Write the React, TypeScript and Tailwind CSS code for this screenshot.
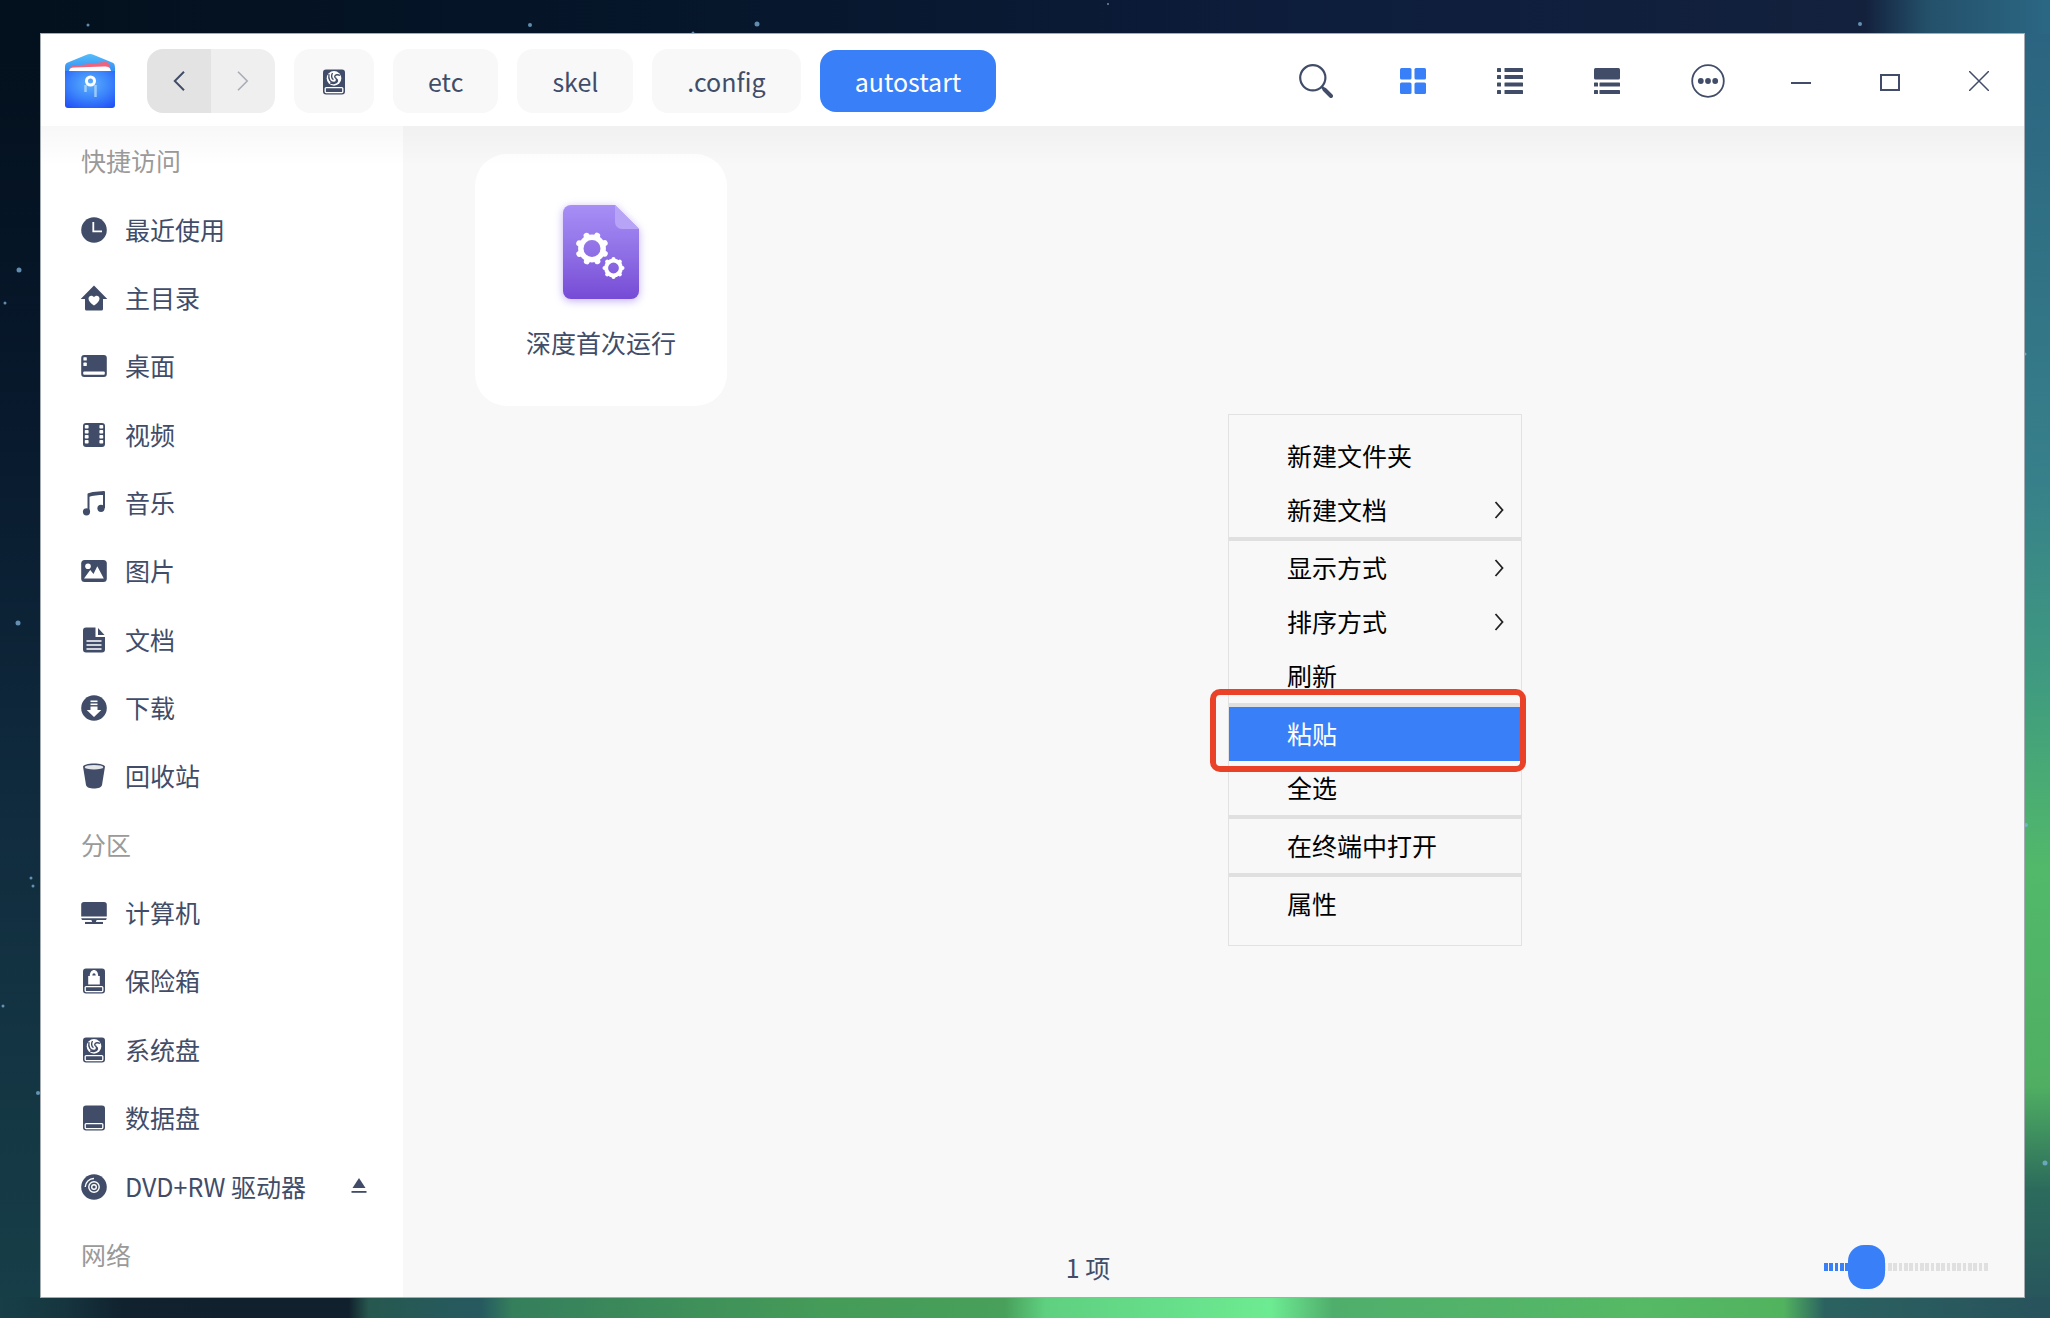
import { useState } from "react";
import type { CSSProperties, ReactNode } from "react";

const INK = "#414d68";

function Glyph({ children }: { children: ReactNode }) {
  return (
    <svg viewBox="0 -1 26 26" className="size-[26px] shrink-0 overflow-visible" fill={INK} aria-hidden="true">
      {children}
    </svg>
  );
}

function DiskBase() {
  return (
    <>
      <rect x="2" y="0.5" width="22" height="25" rx="3" />
      <rect x="4.2" y="18.6" width="17.6" height="5" rx="1" fill="none" stroke="white" strokeWidth="1.3" />
    </>
  );
}

function SystemDisk() {
  return (
    <Glyph>
      <DiskBase />
      <circle cx="13" cy="9.4" r="7.3" fill="white" />
      <path
        d="M8 5.2c-1 5 1.5 8.5 5 8.200 2.600-.3 3.300-3 1.600-4.600M11.500 4c-1.500 2.500-1 5.500 1 6.700M19 6.500c-2.200-1.400-4.800-.8-5.300 1 -.4 1.800 3.300 2.200 2.800 4.500-.6 2.400-4.500 3.200-7.500 1.800"
        fill="none"
        stroke={INK}
        strokeWidth="1.4"
      />
    </Glyph>
  );
}

const icons: Record<string, ReactNode> = {
  recent: (
    <Glyph>
      <circle cx="13" cy="13" r="12.8" />
      <path d="M12.3 5v9.3H21" fill="none" stroke="white" strokeWidth="1.8" />
    </Glyph>
  ),
  home: (
    <Glyph>
      <path d="M13 .5 26.3 14H22v10a1.5 1.5 0 0 1-1.5 1.5h-15A1.5 1.5 0 0 1 4 24V14H-.3z" />
      <path d="M13 20.500c-3-2-5.500-4.300-5.500-6.800 0-3.200 3.800-4.200 5.500-1.500 1.700-2.700 5.500-1.700 5.500 1.500 0 2.500-2.500 4.800-5.500 6.800z" fill="white" />
    </Glyph>
  ),
  desktop: (
    <Glyph>
      <rect x="0.2" y="2" width="25.6" height="22" rx="3" />
      <g fill="white">
        <rect x="2.4" y="4.2" width="3.4" height="3.4" rx=".6" />
        <rect x="2.4" y="9.6" width="3.4" height="3.4" rx=".6" />
        <rect x="2.2" y="18.6" width="21.6" height="3.2" rx="1" />
      </g>
    </Glyph>
  ),
  video: (
    <Glyph>
      <rect x="2" y="1" width="22" height="24" rx="3" />
      <g fill="white">
        {[3, 8, 13, 18].map((y) => (
          <g key={y}>
            <rect x="3.8" y={y} width="3.8" height="3.6" rx=".8" />
            <rect x="18.4" y={y} width="3.8" height="3.6" rx=".8" />
          </g>
        ))}
      </g>
    </Glyph>
  ),
  music: (
    <Glyph>
      <path d="M7.5 21.5V4.3L12 3l11-1v16" fill="none" stroke={INK} strokeWidth="2" strokeLinejoin="round" />
      <path d="M7.5 4.500c4-1.500 10-2 15.500-2v2.500c-6 0-11 .5-15.500 2z" />
      <circle cx="5.5" cy="21.8" r="3.6" />
      <circle cx="20" cy="18.3" r="3.6" />
    </Glyph>
  ),
  picture: (
    <Glyph>
      <rect x="0.2" y="2" width="25.6" height="22" rx="3.5" />
      <g fill="white">
        <circle cx="7" cy="8.3" r="2.8" />
        <path d="M3 20.5 9.2 12l3.300 4 3.800-7.800L22.800 20.500z" />
      </g>
    </Glyph>
  ),
  document: (
    <Glyph>
      <path d="M5 .5h9.500V10H24v12.500a3 3 0 0 1-3 3H5a3 3 0 0 1-3-3v-19a3 3 0 0 1 3-3z" />
      <path d="M17 1l6.500 7H17z" />
      <path d="M5.5 14h15M5.500 18h15M5.500 22h15" stroke="white" strokeWidth="1.5" />
    </Glyph>
  ),
  download: (
    <Glyph>
      <circle cx="13" cy="13" r="12.8" />
      <g fill="white">
        <rect x="9.5" y="5.5" width="7" height="1.6" />
        <rect x="9.5" y="8.5" width="7" height="1.6" />
        <path d="M9.5 11.500h7v3.500h3.800L13 22l-7.300-7h3.800z" />
      </g>
    </Glyph>
  ),
  trash: (
    <Glyph>
      <path d="M2 3.500C2 2 7 .5 13 .5s11 1.500 11 3l-3 18.500c-.5 2.500-4 3.500-8 3.500s-7.500-1-8-3.500z" />
      <ellipse cx="13" cy="4.2" rx="9.3" ry="2.3" fill="#e4e6ea" />
    </Glyph>
  ),
  computer: (
    <Glyph>
      <path d="M3 2h20a2.800 2.800 0 0 1 2.800 2.800V16.500H.2V4.800A2.800 2.800 0 0 1 3 2z" />
      <path d="M.2 18.200h25.600L25 20H15.500v1.500H22V24H4v-2.500h6.500V20H1z" />
      <path d="M4 21.400h7M15 21.400h7" stroke="white" strokeWidth="1" />
    </Glyph>
  ),
  safe: (
    <Glyph>
      <DiskBase />
      <path d="M7.2 8h1.600c0-8 8.400-8 8.400 0h1.600v8.500H7.200z" fill="white" />
      <path d="M11.3 7.600c0-3.300 3.400-3.300 3.400 0z" />
    </Glyph>
  ),
  system: <SystemDisk />,
  data: (
    <Glyph>
      <DiskBase />
    </Glyph>
  ),
  dvd: (
    <Glyph>
      <circle cx="13" cy="13" r="12.8" />
      <g fill="none" stroke="white" strokeWidth="1.4">
        <circle cx="13" cy="13" r="5.2" />
        <circle cx="13" cy="13" r="2.3" />
        <path d="M4.2 13A8.800 8.800 0 0 1 13 4.500" />
      </g>
    </Glyph>
  ),
};

type Row = { label: string; icon?: string; eject?: boolean };

const places: Row[] = [
  { label: "快捷访问" },
  { label: "最近使用", icon: "recent" },
  { label: "主目录", icon: "home" },
  { label: "桌面", icon: "desktop" },
  { label: "视频", icon: "video" },
  { label: "音乐", icon: "music" },
  { label: "图片", icon: "picture" },
  { label: "文档", icon: "document" },
  { label: "下载", icon: "download" },
  { label: "回收站", icon: "trash" },
  { label: "分区" },
  { label: "计算机", icon: "computer" },
  { label: "保险箱", icon: "safe" },
  { label: "系统盘", icon: "system" },
  { label: "数据盘", icon: "data" },
  { label: "DVD+RW 驱动器", icon: "dvd", eject: true },
  { label: "网络" },
];

const menuGroups = [
  [{ label: "新建文件夹" }, { label: "新建文档", sub: true }],
  [{ label: "显示方式", sub: true }, { label: "排序方式", sub: true }, { label: "刷新" }],
  [{ label: "粘贴", active: true }, { label: "全选" }],
  [{ label: "在终端中打开" }],
  [{ label: "属性" }],
] as { label: string; sub?: boolean; active?: boolean }[][];

const stars = [
  [88, 25, 1.5], [530, 25, 2], [757, 24, 2.5], [693, 33, 1.5], [1860, 24, 2], [1959, 36, 2], [1108, 4, 1],
  [19, 270, 2.5], [5, 303, 1.5], [18, 623, 2.5], [31, 878, 1.5], [33, 886, 1.5], [3, 1006, 1.5],
  [38, 1093, 2], [2045, 1163, 2.5], [2026, 825, 2], [2025, 354, 1.5],
];

function Wallpaper() {
  return (
    <svg
      viewBox="0 0 2050 1318"
      preserveAspectRatio="none"
      className="absolute inset-0 size-full"
      aria-hidden="true"
    >
      <defs>
        <linearGradient id="top">
          <stop offset="0" stopColor="#03101d" />
          <stop offset=".35" stopColor="#06162b" />
          <stop offset=".65" stopColor="#0d1d3c" />
          <stop offset=".91" stopColor="#13213d" />
          <stop offset=".94" stopColor="#24506a" />
          <stop offset="1" stopColor="#2b6783" />
        </linearGradient>
        <linearGradient id="left" x2="0" y2="1">
          <stop offset="0" stopColor="#03101d" />
          <stop offset=".3" stopColor="#08192d" />
          <stop offset=".6" stopColor="#102b3e" />
          <stop offset="1" stopColor="#173f48" />
        </linearGradient>
        <linearGradient id="right" x2="0" y2="1">
          <stop offset="0" stopColor="#2b6480" />
          <stop offset=".35" stopColor="#37808a" />
          <stop offset=".5" stopColor="#3f9a80" />
          <stop offset=".65" stopColor="#52b96a" />
          <stop offset=".82" stopColor="#4fae62" />
          <stop offset=".9" stopColor="#2c6b5c" />
          <stop offset="1" stopColor="#27525c" />
        </linearGradient>
        <linearGradient id="bottom">
          <stop offset="0" stopColor="#173f48" />
          <stop offset=".03" stopColor="#16363f" />
          <stop offset=".06" stopColor="#10222e" />
          <stop offset=".17" stopColor="#10202c" />
          <stop offset=".18" stopColor="#27584f" />
          <stop offset=".235" stopColor="#265a60" />
          <stop offset=".25" stopColor="#357f5c" />
          <stop offset=".4" stopColor="#459b58" />
          <stop offset=".49" stopColor="#48a05a" />
          <stop offset=".51" stopColor="#5fd080" />
          <stop offset=".62" stopColor="#6deb92" />
          <stop offset=".65" stopColor="#50ae6c" />
          <stop offset=".8" stopColor="#55b965" />
          <stop offset=".87" stopColor="#52b35f" />
          <stop offset=".89" stopColor="#2b6260" />
          <stop offset="1" stopColor="#28525c" />
        </linearGradient>
      </defs>
      <rect width="2050" height="1318" fill="url(#top)" />
      <rect y="34" width="60" height="1284" fill="url(#left)" />
      <rect x="2000" y="34" width="50" height="1284" fill="url(#right)" />
      <rect y="1297" width="2050" height="21" fill="url(#bottom)" />
      {stars.map(([x, y, r]) => (
        <circle key={`${x}-${y}`} cx={x} cy={y} r={r} fill="#7fb4dc" opacity=".75" />
      ))}
    </svg>
  );
}

function AppLogo() {
  return (
    <svg viewBox="0 0 50 54" className="h-[54px] w-[50px]" aria-hidden="true">
      <defs>
        <linearGradient id="lid" x2="0" y2="1">
          <stop offset="0" stopColor="#55bdfb" />
          <stop offset=".4" stopColor="#2f86f2" />
        </linearGradient>
        <radialGradient id="pouch" cx=".5" cy=".35" r=".8">
          <stop offset="0" stopColor="#5cb0fb" />
          <stop offset=".5" stopColor="#3b84fb" />
          <stop offset="1" stopColor="#1f4cf6" />
        </radialGradient>
      </defs>
      <path d="M0 14c0-4 1-5 4-6L21 1c3-1.300 5-1.300 8 0l17 7c3 1 4 2 4 6v36H0z" fill="url(#lid)" />
      <path d="M4 16c0-3 2-4 5-4l30-4c4-.5 5 1 6 5v4H4z" fill="#f0637d" />
      <path d="M4 17c1-3 2-3 5-3.500l30-1c5 0 6 1 7 4.500z" fill="white" />
      <path d="M0 17h50v34c0 2-1 3-3 3H3c-2 0-3-1-3-3z" fill="url(#pouch)" />
      <circle cx="25.5" cy="27" r="4" fill="none" stroke="white" strokeWidth="3" />
      <path d="M20.5 31v7M30.500 31v12" stroke="#b7dcff" strokeWidth="2.5" opacity=".75" />
    </svg>
  );
}

function FileIcon() {
  return (
    <svg
      viewBox="0 0 76 94"
      className="h-[94px] w-[76px] drop-shadow-[0_2px_4px_rgba(125,80,230,0.45)]"
      aria-hidden="true"
    >
      <defs>
        <linearGradient id="sheet" x2="0" y2="1">
          <stop offset="0" stopColor="#a78ff6" />
          <stop offset=".5" stopColor="#9070e6" />
          <stop offset="1" stopColor="#764bd5" />
        </linearGradient>
      </defs>
      <path d="M8 0h44l24 24v62a8 8 0 0 1-8 8H8a8 8 0 0 1-8-8V8a8 8 0 0 1 8-8z" fill="url(#sheet)" />
      <path d="M52 0l24 24H59a7 7 0 0 1-7-7z" fill="#b8a4f6" />
      <g fill="none" stroke="white">
        <circle cx="29" cy="43.5" r="11.2" strokeWidth="5.4" />
        <circle cx="50.5" cy="63" r="7.4" strokeWidth="4" />
      </g>
      <g stroke="white" strokeLinecap="round">
        {[22, 67, 112, 157, 202, 247, 292, 337].map((a) => (
          <path key={a} d="M29 30.500v-.8" strokeWidth="6" transform={`rotate(${a} 29 43.5)`} />
        ))}
        {[0, 45, 90, 135, 180, 225, 270, 315].map((a) => (
          <path key={a} d="M50.5 54.500v-.5" strokeWidth="4" transform={`rotate(${a} 50.5 63)`} />
        ))}
      </g>
    </svg>
  );
}

function Toolbar() {
  const crumb = "h-16 rounded-2xl bg-[#f8f8f8] px-[35px]";
  const view = "flex h-16 w-[97px] items-center justify-center";
  const control = "flex h-16 w-[89px] items-center justify-center";

  return (
    <header className="flex h-[92px] shrink-0 items-center bg-white pl-6 pr-px pt-0.5">
      <AppLogo />
      <nav className="ml-8 flex items-center gap-[19px]">
        <div className="flex overflow-hidden rounded-2xl">
          <button aria-label="后退" className="flex h-16 w-16 items-center justify-center bg-[#e3e3e3]">
            <svg viewBox="0 0 12 20" className="h-5 w-3" fill="none" stroke={INK} strokeWidth="2">
              <path d="M11 .8 1.8 10 11 19.200" />
            </svg>
          </button>
          <button aria-label="前进" className="flex h-16 w-16 items-center justify-center bg-[#efefef]">
            <svg viewBox="0 0 12 20" className="h-5 w-3" fill="none" stroke="#a9adb8" strokeWidth="1.6">
              <path d="M1 .8 10.2 10 1 19.200" />
            </svg>
          </button>
        </div>
        <button aria-label="系统盘" className="flex h-16 w-20 items-center justify-center rounded-2xl bg-[#f8f8f8]">
          <SystemDisk />
        </button>
        <button className={crumb}>etc</button>
        <button className={crumb}>skel</button>
        <button className={crumb}>.config</button>
        <button className="h-[62px] rounded-2xl bg-[#397ff7] px-[35px] text-white">autostart</button>
      </nav>

      <div className="ml-auto flex gap-1">
        <div className="flex">
          <button aria-label="搜索" className={view}>
            <svg viewBox="0 0 34 34" className="size-[34px]" fill="none" stroke={INK} strokeLinecap="round">
              <circle cx="13.8" cy="13.8" r="12.6" strokeWidth="2.2" />
              <path d="M23 23l2.500 2.500" strokeWidth="2.5" />
              <path d="M25.5 25.500 32 32" strokeWidth="4" />
            </svg>
          </button>
          <button aria-label="图标视图" className={view}>
            <svg viewBox="0 0 26 26" className="size-[26px]" fill="#397ff7">
              <rect width="11.5" height="11.5" rx="1.5" />
              <rect x="14.5" width="11.5" height="11.5" rx="1.5" />
              <rect y="14.5" width="11.5" height="11.5" rx="1.5" />
              <rect x="14.5" y="14.5" width="11.5" height="11.5" rx="1.5" />
            </svg>
          </button>
          <button aria-label="列表视图" className={view}>
            <svg viewBox="0 0 26 26" className="size-[26px]" fill={INK}>
              {[0, 7, 14.5, 22].map((y) => (
                <g key={y}>
                  <rect y={y} width="4" height="4" rx=".6" />
                  <rect x="7.5" y={y} width="18.5" height="4" rx=".6" />
                </g>
              ))}
            </svg>
          </button>
          <button aria-label="分栏视图" className={view}>
            <svg viewBox="0 0 26 26" className="size-[26px]" fill={INK}>
              <rect width="26" height="11.5" rx="1.5" />
              {[14.5, 22].map((y) => (
                <g key={y}>
                  <rect y={y} width="4" height="4" rx=".6" />
                  <rect x="5.5" y={y} width="20.5" height="4" rx=".6" />
                </g>
              ))}
            </svg>
          </button>
        </div>
        <div className="flex">
          <button aria-label="更多" className={view}>
            <svg viewBox="0 0 34 34" className="size-[34px]" fill={INK}>
              <circle cx="17" cy="17" r="15.8" fill="none" stroke={INK} strokeWidth="1.8" />
              <circle cx="9.8" cy="17" r="2.9" />
              <circle cx="17" cy="17" r="2.9" />
              <circle cx="24.2" cy="17" r="2.9" />
            </svg>
          </button>
          <button aria-label="最小化" className={control}>
            <svg viewBox="0 0 20 20" className="size-5" stroke={INK} strokeWidth="2">
              <path d="M0 12h20" />
            </svg>
          </button>
          <button aria-label="最大化" className={control}>
            <svg viewBox="0 0 20 20" className="size-5" fill="none" stroke={INK} strokeWidth="2">
              <path d="M1 4h18v15H1z" />
            </svg>
          </button>
          <button aria-label="关闭" className={control}>
            <svg viewBox="0 0 20 20" className="size-5" stroke={INK} strokeWidth="1.5">
              <path d="M0 0 20 20M20 0 0 20" />
            </svg>
          </button>
        </div>
      </div>
    </header>
  );
}

function Sidebar() {
  return (
    <aside className="flex w-[362px] shrink-0 flex-col bg-white pb-[9px] pl-10 pr-[34px]">
      {places.map((row) =>
        row.icon ? (
          <div key={row.label} className="flex flex-1 items-center">
            <button className="flex items-center gap-[18px] whitespace-nowrap">
              {icons[row.icon]}
              {row.label}
            </button>
            {row.eject && (
              <button aria-label="弹出" className="ml-auto">
                <svg viewBox="0 0 20 20" className="size-5" fill={INK}>
                  <path d="M10 2l6.500 10h-13z" />
                  <rect x="2.5" y="15" width="15" height="1.8" />
                </svg>
              </button>
            )}
          </div>
        ) : (
          <h2 key={row.label} className="flex flex-1 items-center text-[#9a9a9a]">
            {row.label}
          </h2>
        )
      )}
    </aside>
  );
}

function ContextMenu() {
  return (
    <div
      role="menu"
      className="absolute left-[825px] top-[288px] w-[294px] border border-[#e2e2e2] bg-[#f8f8f8] py-[14px] text-black"
    >
      {menuGroups.map((group, i) => (
        <div key={i} className={i > 0 ? "border-t-4 border-[#e0e0e0]" : ""}>
          {group.map((item) => (
            <button
              key={item.label}
              role="menuitem"
              className={
                item.active
                  ? "relative flex h-[54px] w-full items-center bg-[#397ff7] pb-[3px] pl-[58px] text-white"
                  : "flex h-[54px] w-full items-center pb-[3px] pl-[58px] pr-[17px]"
              }
            >
              {item.label}
              {item.sub && (
                <svg viewBox="0 -1 10 18" className="ml-auto h-[18px] w-[10px] overflow-visible" fill="none" stroke="#222" strokeWidth="1.8">
                  <path d="M1.5 1 8.5 9l-7 8" />
                </svg>
              )}
              {item.active && (
                <span className="pointer-events-none absolute -bottom-[11px] -left-[19px] -right-[5px] -top-[18px] z-10 rounded-[10px] border-6 border-[#e94228]" />
              )}
            </button>
          ))}
        </div>
      ))}
    </div>
  );
}

function App() {
  const [zoom, setZoom] = useState(19);

  const sliderStyle = {
    backgroundImage: `repeating-linear-gradient(to right, transparent 0 4px, #f8f8f8 4px 5px, transparent 5px 9px, #f8f8f8 9px 11px, transparent 11px 14px, #f8f8f8 14px 16px), linear-gradient(to right, #397ff7 ${zoom + 7}%, #e0e0e0 ${zoom + 7}%)`,
  } as CSSProperties;

  return (
    <div className="relative flex h-screen bg-[#06162b] pb-[21px] pl-[41px] pr-[26px] pt-[34px] font-['Noto_Sans_CJK_SC',sans-serif] text-[25px] leading-9 text-[#414d68]">
      <Wallpaper />

      <div className="relative flex min-w-0 flex-1 flex-col bg-white ring-1 ring-[#a4acb2]">
        <Toolbar />

        <div className="relative flex min-h-0 flex-1">
          <Sidebar />

          <main className="relative flex min-w-0 flex-1 flex-col bg-[#f8f8f8]">
            <div className="flex-1 pl-[72px] pt-7">
              <button className="flex size-[252px] flex-col items-center gap-[25px] rounded-[32px] bg-white pt-[51px]">
                <FileIcon />
                深度首次运行
              </button>
            </div>

            <footer className="flex h-[60px] items-center">
              <div className="flex-1 text-center">1 项</div>
              <div className="flex w-[251px] pl-[51px]">
                <input
                  type="range"
                  aria-label="图标大小"
                  min={0}
                  max={100}
                  value={zoom}
                  onChange={(e) => setZoom(Number(e.target.value))}
                  style={sliderStyle}
                  className="h-11 w-[165px] appearance-none bg-[length:100%_8px] bg-center bg-no-repeat [&::-webkit-slider-thumb]:h-11 [&::-webkit-slider-thumb]:w-[37px] [&::-webkit-slider-thumb]:appearance-none [&::-webkit-slider-thumb]:rounded-2xl [&::-webkit-slider-thumb]:bg-[#397ff7]"
                />
              </div>
            </footer>

            <ContextMenu />
          </main>

          <div className="pointer-events-none absolute inset-x-0 top-0 h-10 bg-linear-to-b from-black/3 to-transparent" />
        </div>
      </div>
    </div>
  );
}

export default App;
